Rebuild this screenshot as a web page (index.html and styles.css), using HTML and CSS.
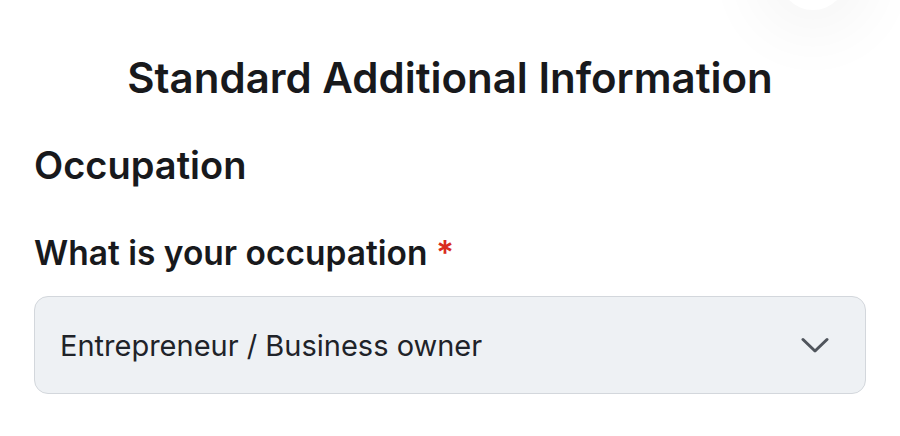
FILE: index.html
```html
<!DOCTYPE html>
<html lang="en">
<head>
    <meta charset="UTF-8">
    <meta name="viewport" content="width=device-width, initial-scale=1.0">
    <title>Standard Additional Information</title>
    <link rel="stylesheet" href="styles.css">
</head>
<body>
    <button class="fab" type="button" aria-label="Help"></button>
    <div class="container">
        <h1>Standard Additional Information</h1>
        <h2>Occupation</h2>
        <div class="form-group">
            <label for="occupation">What is your occupation <span class="required">*</span></label>
            <div class="select">
                <span class="select-value" id="occupation">Entrepreneur / Business owner</span>
                <svg class="chevron" width="28" height="16" viewBox="0 0 28 16" fill="none" stroke="currentColor" stroke-width="3" stroke-linecap="round" stroke-linejoin="round">
                    <path d="M2 2.5l12 11.5 12-11.5"/>
                </svg>
            </div>
        </div>
    </div>
</body>
</html>
```

FILE: styles.css
```css
body {
    font-family: 'Inter', 'Noto Sans', sans-serif;
    background-color: #ffffff;
    color: #18191c;
    margin: 0;
    overflow: hidden;
}

.container {
    padding: 50px 34px 0 34px;
}

h1 {
    margin: 0;
    text-align: center;
    font-size: 42px;
    font-weight: 600;
    line-height: 56px;
}

h2 {
    margin: 35px 0 0 0;
    font-size: 38px;
    font-weight: 600;
    line-height: 48px;
}

.form-group {
    margin-top: 42px;
}

label {
    display: block;
    font-size: 33.5px;
    font-weight: 600;
    line-height: 44px;
    margin-bottom: 21px;
}

.required {
    color: #d92d20;
}

.select {
    display: flex;
    align-items: center;
    justify-content: space-between;
    height: 98px;
    padding: 0 36px 0 25px;
    background-color: #eef1f4;
    border: 1.5px solid #d3d7dc;
    border-radius: 14px;
    box-sizing: border-box;
}

.select-value {
    font-size: 29px;
    color: #1f2329;
}

.chevron {
    color: #50555c;
}

/* boton flotante recortado arriba a la derecha */
.fab {
    position: absolute;
    top: -58px;
    left: 779px;
    width: 68px;
    height: 68px;
    border-radius: 50%;
    border: none;
    background: #ffffff;
    box-shadow: 0 0 60px 30px rgba(0, 0, 0, 0.035);
}
```
